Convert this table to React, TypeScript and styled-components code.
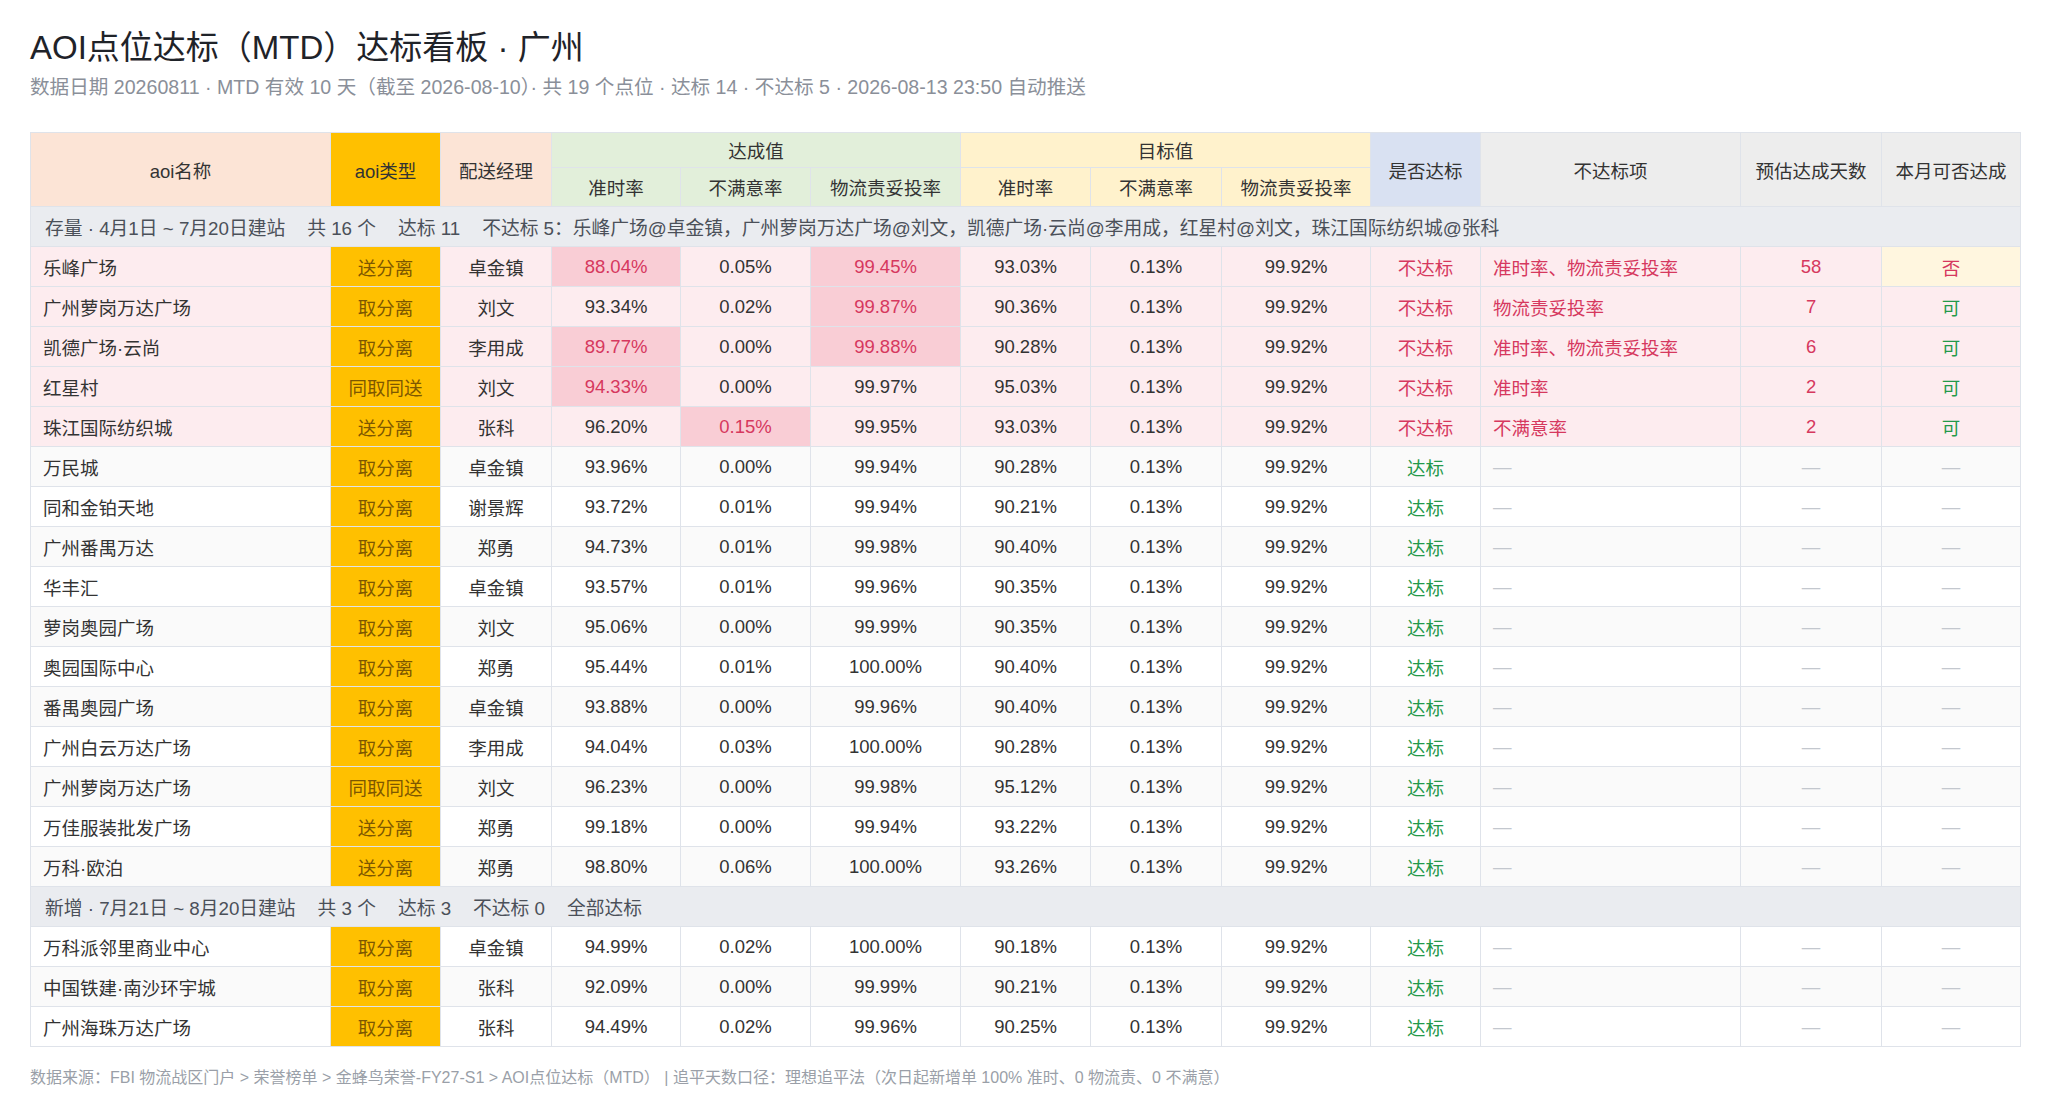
import React from "react";
import styled, { createGlobalStyle, css } from "styled-components";

const Global = createGlobalStyle`
  html, body { margin: 0; padding: 0; background: #ffffff; }
  body { font-family: "Liberation Sans", "Noto Sans CJK SC", sans-serif; color: #333; }
`;

const Page = styled.div`
  padding: 28px 30px 20px 30px;
  width: 1990px;
`;

const Title = styled.h1`
  margin: 0;
  font-size: 33px;
  line-height: 40px;
  font-weight: 400;
  color: #1f2329;
`;

const Subtitle = styled.div`
  margin-top: 7px;
  font-size: 19.6px;
  line-height: 24px;
  color: #8a8f99;
`;

const Table = styled.table`
  margin-top: 33px;
  width: 1990px;
  border-collapse: collapse;
  table-layout: fixed;
  font-size: 18.5px;
`;

type HeadTone = "peach" | "amber" | "green" | "yellow" | "blue" | "gray";
const headBg: Record<HeadTone, string> = {
  peach: "#fce4d6",
  amber: "#ffc000",
  green: "#e2efda",
  yellow: "#fff2cc",
  blue: "#d9e1f2",
  gray: "#ededed",
};

const Th = styled.th<{ $tone: HeadTone }>`
  background: ${(p) => headBg[p.$tone]};
  border: 1px solid #dfe3ea;
  font-weight: 400;
  color: #333;
  text-align: center;
  padding: 0 6px;
  white-space: nowrap;
`;

const HeadRow = styled.tr<{ $h: number }>`
  height: ${(p) => p.$h}px;
`;

const GroupRow = styled.tr`
  height: 40px;
`;

const GroupCell = styled.td`
  background: #eaecf0;
  border: 1px solid #dfe3ea;
  color: #4b5059;
  font-size: 18.75px;
  padding: 0 14px;
  white-space: nowrap;
`;

const Seg = styled.span`
  margin-right: 22px;
`;

type RowTone = "fail" | "zebra" | "plain";
const DataRow = styled.tr<{ $tone: RowTone }>`
  height: 40px;
  background: ${(p) =>
    p.$tone === "fail" ? "#fdecef" : p.$tone === "zebra" ? "#fafafa" : "#ffffff"};
`;

const Td = styled.td<{ $align?: "left" | "center"; $bad?: boolean; $type?: boolean; $color?: string; $bg?: string }>`
  border: 1px solid #dfe3ea;
  padding: 0 12px;
  text-align: ${(p) => p.$align ?? "center"};
  white-space: nowrap;
  color: ${(p) => p.$color ?? "#333"};
  ${(p) =>
    p.$bad &&
    css`
      background: #f9cdd5;
      color: #d6385e;
    `}
  ${(p) =>
    p.$type &&
    css`
      background: #ffc000;
      color: #7d5700;
    `}
  ${(p) =>
    p.$bg &&
    css`
      background: ${p.$bg};
    `}
`;

const Dash = styled.span`
  color: #c3c7ce;
`;

const Footer = styled.div`
  margin-top: 21px;
  font-size: 16px;
  line-height: 20px;
  color: #9a9fa8;
`;

type Row = {
  name: string;
  type: string;
  mgr: string;
  on: string;
  dis: string;
  del: string;
  tOn: string;
  bad?: ("on" | "dis" | "del")[];
  miss?: string;
  days?: string;
  can?: string;
};

const stock: Row[] = [
  { name: "乐峰广场", type: "送分离", mgr: "卓金镇", on: "88.04%", dis: "0.05%", del: "99.45%", tOn: "93.03%", bad: ["on", "del"], miss: "准时率、物流责妥投率", days: "58", can: "否" },
  { name: "广州萝岗万达广场", type: "取分离", mgr: "刘文", on: "93.34%", dis: "0.02%", del: "99.87%", tOn: "90.36%", bad: ["del"], miss: "物流责妥投率", days: "7", can: "可" },
  { name: "凯德广场·云尚", type: "取分离", mgr: "李用成", on: "89.77%", dis: "0.00%", del: "99.88%", tOn: "90.28%", bad: ["on", "del"], miss: "准时率、物流责妥投率", days: "6", can: "可" },
  { name: "红星村", type: "同取同送", mgr: "刘文", on: "94.33%", dis: "0.00%", del: "99.97%", tOn: "95.03%", bad: ["on"], miss: "准时率", days: "2", can: "可" },
  { name: "珠江国际纺织城", type: "送分离", mgr: "张科", on: "96.20%", dis: "0.15%", del: "99.95%", tOn: "93.03%", bad: ["dis"], miss: "不满意率", days: "2", can: "可" },
  { name: "万民城", type: "取分离", mgr: "卓金镇", on: "93.96%", dis: "0.00%", del: "99.94%", tOn: "90.28%" },
  { name: "同和金铂天地", type: "取分离", mgr: "谢景辉", on: "93.72%", dis: "0.01%", del: "99.94%", tOn: "90.21%" },
  { name: "广州番禺万达", type: "取分离", mgr: "郑勇", on: "94.73%", dis: "0.01%", del: "99.98%", tOn: "90.40%" },
  { name: "华丰汇", type: "取分离", mgr: "卓金镇", on: "93.57%", dis: "0.01%", del: "99.96%", tOn: "90.35%" },
  { name: "萝岗奥园广场", type: "取分离", mgr: "刘文", on: "95.06%", dis: "0.00%", del: "99.99%", tOn: "90.35%" },
  { name: "奥园国际中心", type: "取分离", mgr: "郑勇", on: "95.44%", dis: "0.01%", del: "100.00%", tOn: "90.40%" },
  { name: "番禺奥园广场", type: "取分离", mgr: "卓金镇", on: "93.88%", dis: "0.00%", del: "99.96%", tOn: "90.40%" },
  { name: "广州白云万达广场", type: "取分离", mgr: "李用成", on: "94.04%", dis: "0.03%", del: "100.00%", tOn: "90.28%" },
  { name: "广州萝岗万达广场", type: "同取同送", mgr: "刘文", on: "96.23%", dis: "0.00%", del: "99.98%", tOn: "95.12%" },
  { name: "万佳服装批发广场", type: "送分离", mgr: "郑勇", on: "99.18%", dis: "0.00%", del: "99.94%", tOn: "93.22%" },
  { name: "万科·欧泊", type: "送分离", mgr: "郑勇", on: "98.80%", dis: "0.06%", del: "100.00%", tOn: "93.26%" },
];

const fresh: Row[] = [
  { name: "万科派邻里商业中心", type: "取分离", mgr: "卓金镇", on: "94.99%", dis: "0.02%", del: "100.00%", tOn: "90.18%" },
  { name: "中国铁建·南沙环宇城", type: "取分离", mgr: "张科", on: "92.09%", dis: "0.00%", del: "99.99%", tOn: "90.21%" },
  { name: "广州海珠万达广场", type: "取分离", mgr: "张科", on: "94.49%", dis: "0.02%", del: "99.96%", tOn: "90.25%" },
];

const widths = [300, 110, 111, 129, 130, 150, 130, 131, 149, 110, 260, 141, 139];

const RED = "#d6385e";
const GREEN = "#23994a";

function DataLine({ r, idx }: { r: Row; idx: number }) {
  const fail = !!r.bad;
  const tone: RowTone = fail ? "fail" : idx % 2 === 1 ? "zebra" : "plain";
  const isBad = (k: "on" | "dis" | "del") => !!r.bad && r.bad.includes(k);
  return (
    <DataRow $tone={tone}>
      <Td $align="left">{r.name}</Td>
      <Td $type>{r.type}</Td>
      <Td>{r.mgr}</Td>
      <Td $bad={isBad("on")}>{r.on}</Td>
      <Td $bad={isBad("dis")}>{r.dis}</Td>
      <Td $bad={isBad("del")}>{r.del}</Td>
      <Td>{r.tOn}</Td>
      <Td>0.13%</Td>
      <Td>99.92%</Td>
      <Td $color={fail ? RED : GREEN}>{fail ? "不达标" : "达标"}</Td>
      <Td $align="left" $color={RED}>{fail ? r.miss : <Dash>—</Dash>}</Td>
      <Td $color={RED}>{fail ? r.days : <Dash>—</Dash>}</Td>
      {fail ? (
        <Td $color={r.can === "否" ? RED : GREEN} $bg={r.can === "否" ? "#fff6df" : undefined}>
          {r.can}
        </Td>
      ) : (
        <Td>
          <Dash>—</Dash>
        </Td>
      )}
    </DataRow>
  );
}

export default function App() {
  return (
    <>
      <Global />
      <Page>
        <Title>AOI点位达标（MTD）达标看板 · 广州</Title>
        <Subtitle>
          数据日期 20260811 · MTD 有效 10 天（截至 2026-08-10）· 共 19 个点位 · 达标 14 · 不达标 5 · 2026-08-13 23:50 自动推送
        </Subtitle>
        <Table>
          <colgroup>
            {widths.map((w, i) => (
              <col key={i} style={{ width: w }} />
            ))}
          </colgroup>
          <thead>
            <HeadRow $h={35}>
              <Th $tone="peach" rowSpan={2}>aoi名称</Th>
              <Th $tone="amber" rowSpan={2}>aoi类型</Th>
              <Th $tone="peach" rowSpan={2}>配送经理</Th>
              <Th $tone="green" colSpan={3}>达成值</Th>
              <Th $tone="yellow" colSpan={3}>目标值</Th>
              <Th $tone="blue" rowSpan={2}>是否达标</Th>
              <Th $tone="gray" rowSpan={2}>不达标项</Th>
              <Th $tone="gray" rowSpan={2}>预估达成天数</Th>
              <Th $tone="gray" rowSpan={2}>本月可否达成</Th>
            </HeadRow>
            <HeadRow $h={39}>
              <Th $tone="green">准时率</Th>
              <Th $tone="green">不满意率</Th>
              <Th $tone="green">物流责妥投率</Th>
              <Th $tone="yellow">准时率</Th>
              <Th $tone="yellow">不满意率</Th>
              <Th $tone="yellow">物流责妥投率</Th>
            </HeadRow>
          </thead>
          <tbody>
            <GroupRow>
              <GroupCell colSpan={13}>
                <Seg>存量 · 4月1日 ~ 7月20日建站</Seg>
                <Seg>共 16 个</Seg>
                <Seg>达标 11</Seg>
                <span>不达标 5：乐峰广场@卓金镇，广州萝岗万达广场@刘文，凯德广场·云尚@李用成，红星村@刘文，珠江国际纺织城@张科</span>
              </GroupCell>
            </GroupRow>
            {stock.map((r, i) => (
              <DataLine key={"s" + i} r={r} idx={i} />
            ))}
            <GroupRow>
              <GroupCell colSpan={13}>
                <Seg>新增 · 7月21日 ~ 8月20日建站</Seg>
                <Seg>共 3 个</Seg>
                <Seg>达标 3</Seg>
                <Seg>不达标 0</Seg>
                <span>全部达标</span>
              </GroupCell>
            </GroupRow>
            {fresh.map((r, i) => (
              <DataLine key={"f" + i} r={r} idx={i} />
            ))}
          </tbody>
        </Table>
        <Footer>
          数据来源：FBI 物流战区门户 &gt; 荣誉榜单 &gt; 金蜂鸟荣誉-FY27-S1 &gt; AOI点位达标（MTD） | 追平天数口径：理想追平法（次日起新增单 100% 准时、0 物流责、0 不满意）
        </Footer>
      </Page>
    </>
  );
}
